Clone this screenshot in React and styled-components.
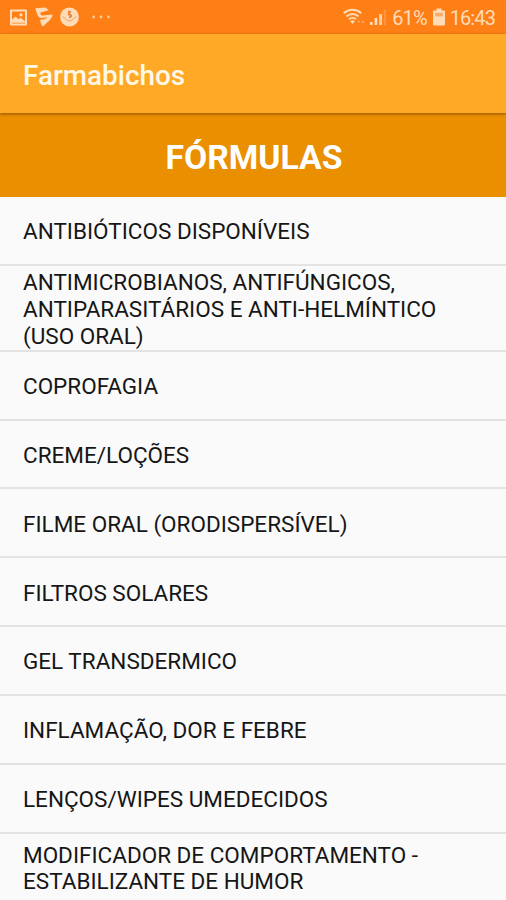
import React from 'react'
import styled, { createGlobalStyle } from 'styled-components'

const GlobalStyle = createGlobalStyle`
	* {
		box-sizing: border-box;
	}

	body {
		margin: 0;
		background: #fafafa;
		font-family: Roboto, "Liberation Sans", sans-serif;
	}
`

const Screen = styled.div`
	width: 100%;
	height: 900px;
	overflow: hidden;
	background: #fafafa;
`

const StatusBar = styled.div`
	height: 34px;
	padding: 0 10px;
	display: flex;
	align-items: center;
	justify-content: space-between;
	background: #ff7f17;
	color: #ffdcb8;
`

const StatusGroup = styled.div`
	height: 34px;
	display: flex;
	align-items: center;
	gap: ${props => props.gap}px;
`

const StatusText = styled.span`
	font-size: 20px;
	line-height: 34px;
	letter-spacing: -0.9px;
	padding: 2px 1px 0 0;
`

const AppBar = styled.header`
	position: relative;
	height: 79px;
	padding: 3px 23px 0;
	display: flex;
	align-items: center;
	background: #ffa926;
	box-shadow: 0 1px 3px rgba(90, 45, 0, 0.65);
`

const AppTitle = styled.h1`
	margin: 0;
	font-size: 27.9px;
	font-weight: 500;
	color: #fff8e6;
`

const Banner = styled.div`
	height: 84px;
	padding-top: 5px;
	display: flex;
	align-items: center;
	justify-content: center;
	background: #e98f00;
`

const BannerTitle = styled.h2`
	margin: 0;
	padding-left: 2px;
	font-size: 33.7px;
	font-weight: 700;
	color: #fff;
`

const List = styled.ul`
	margin: 0;
	padding: 0;
	list-style: none;
`

const Row = styled.li`
	height: ${props => props.height || 68.9}px;
	padding: ${props => props.height ? 3 : 2.2}px 23px 0;
	display: flex;
	align-items: center;
	border-bottom: 2px solid #e3e3e3;
`

const RowText = styled.span`
	font-size: 22.5px;
	line-height: 26.6px;
	color: #161616;
	white-space: pre-line;
`

const PictureIcon = () => (
	<svg width="17" height="17" viewBox="0 0 17 17">
		<path fill="currentColor" fillRule="evenodd" d="M1 0.5h15a1 1 0 0 1 1 1v14a1 1 0 0 1-1 1H1a1 1 0 0 1-1-1v-14a1 1 0 0 1 1-1zM2 2.5v12h13v-12z" />
		<path fill="currentColor" d="M2 13.8v-3.200l3.600-3 3 2.600 2-1.400 4.400 3.400v1.600z" />
		<circle cx="11" cy="5.8" r="1.6" fill="currentColor" />
	</svg>
)

const SwirlIcon = () => (
	<svg width="18" height="20" viewBox="0 0 18 20">
		<path fill="currentColor" d="M0.3 1.200L10.500 0.400L13.600 3.200L9.200 4.600L5.600 5.600Q4.800 8.300 7.400 8.600L16.800 7.500Q18 7.800 17.200 9.800L14.800 13L8 19.400L6.200 17.500L5 12.700L9.800 12.200L12.600 10.300L6.400 11Q3.600 10.900 2.200 7.600Z" />
	</svg>
)

const CoinIcon = () => (
	<svg width="19" height="20" viewBox="0.5 0 19 20">
		<circle cx="10" cy="10" r="9.4" fill="currentColor" />
		<g fill="none" stroke="#e88a3c">
			<path strokeWidth="2" d="M11.600 4.800H9.400v2.700c2.900-.3 2.900 2.800.2 2.500" />
			<path strokeWidth="1" opacity="0.7" d="M3 9.500l5.200 4.200h3.600L17 9.500" />
		</g>
	</svg>
)

const MoreIcon = () => (
	<svg width="23" height="4" viewBox="-5 0 23 4">
		<g fill="currentColor" opacity="0.85">
			<circle cx="1.6" cy="2" r="1.4" />
			<circle cx="9" cy="2" r="1.4" />
			<circle cx="16.400" cy="2" r="1.4" />
		</g>
	</svg>
)

const WifiIcon = () => (
	<svg width="22" height="18" viewBox="0 0 22 18">
		<g fill="none" stroke="currentColor" strokeWidth="2">
			<path d="M0.8 5.2C5.7 0.7 13.3 0.7 18.2 5.2" />
			<path d="M3.5 8.4C7 5.2 12 5.2 15.5 8.4" />
			<path d="M6 11.3C8 9.5 11 9.5 13 11.3" />
		</g>
		<path fill="currentColor" d="M7.2 13.3q2.3-2 4.6 0L9.5 16z" />
		<path fill="currentColor" opacity="0.4" d="M14 12.5h3.400l-1.700 3zM18.200 15l1.700-3 1.700 3z" />
	</svg>
)

const SignalIcon = () => (
	<svg width="17" height="18" viewBox="0 0 17 18">
		<g fill="currentColor">
			<rect x="0" y="14" width="2.6" height="3" />
			<rect x="4.6" y="10" width="2.6" height="7" />
			<rect x="9.200" y="6" width="2.8" height="11" opacity="0.9" />
			<rect x="13.8" y="1.5" width="2" height="15.5" opacity="0.25" />
		</g>
	</svg>
)

const BatteryIcon = () => (
	<svg width="12" height="18" viewBox="0 0 12 18">
		<path fill="currentColor" d="M3.5 0.5h5v2H11a1 1 0 0 1 1 1V16.500a1 1 0 0 1-1 1H1a1 1 0 0 1-1-1V3.500a1 1 0 0 1 1-1h2.500z" />
		<rect x="2.2" y="4.8" width="7.600" height="3.600" fill="#fbab68" />
	</svg>
)

const formulas = [
	{ name: 'ANTIBIÓTICOS DISPONÍVEIS' },
	{
		name: 'ANTIMICROBIANOS, ANTIFÚNGICOS,\nANTIPARASITÁRIOS E ANTI-HELMÍNTICO\n(USO ORAL)',
		height: 85.8
	},
	{ name: 'COPROFAGIA' },
	{ name: 'CREME/LOÇÕES' },
	{ name: 'FILME ORAL (ORODISPERSÍVEL)' },
	{ name: 'FILTROS SOLARES' },
	{ name: 'GEL TRANSDERMICO' },
	{ name: 'INFLAMAÇÃO, DOR E FEBRE' },
	{ name: 'LENÇOS/WIPES UMEDECIDOS' },
	{ name: 'MODIFICADOR DE COMPORTAMENTO -\nESTABILIZANTE DE HUMOR' }
]

export default class App extends React.Component {
	render() {
		return (
			<Screen>
				<GlobalStyle />
				<StatusBar>
					<StatusGroup gap={7.5}>
						<PictureIcon />
						<SwirlIcon />
						<CoinIcon />
						<MoreIcon />
					</StatusGroup>
					<StatusGroup gap={5}>
						<WifiIcon />
						<SignalIcon />
						<StatusText>61%</StatusText>
						<BatteryIcon />
						<StatusText>16:43</StatusText>
					</StatusGroup>
				</StatusBar>
				<AppBar>
					<AppTitle>Farmabichos</AppTitle>
				</AppBar>
				<Banner>
					<BannerTitle>FÓRMULAS</BannerTitle>
				</Banner>
				<List>
					{formulas.map(item => (
						<Row key={item.name} height={item.height}>
							<RowText>{item.name}</RowText>
						</Row>
					))}
				</List>
			</Screen>
		)
	}
}
